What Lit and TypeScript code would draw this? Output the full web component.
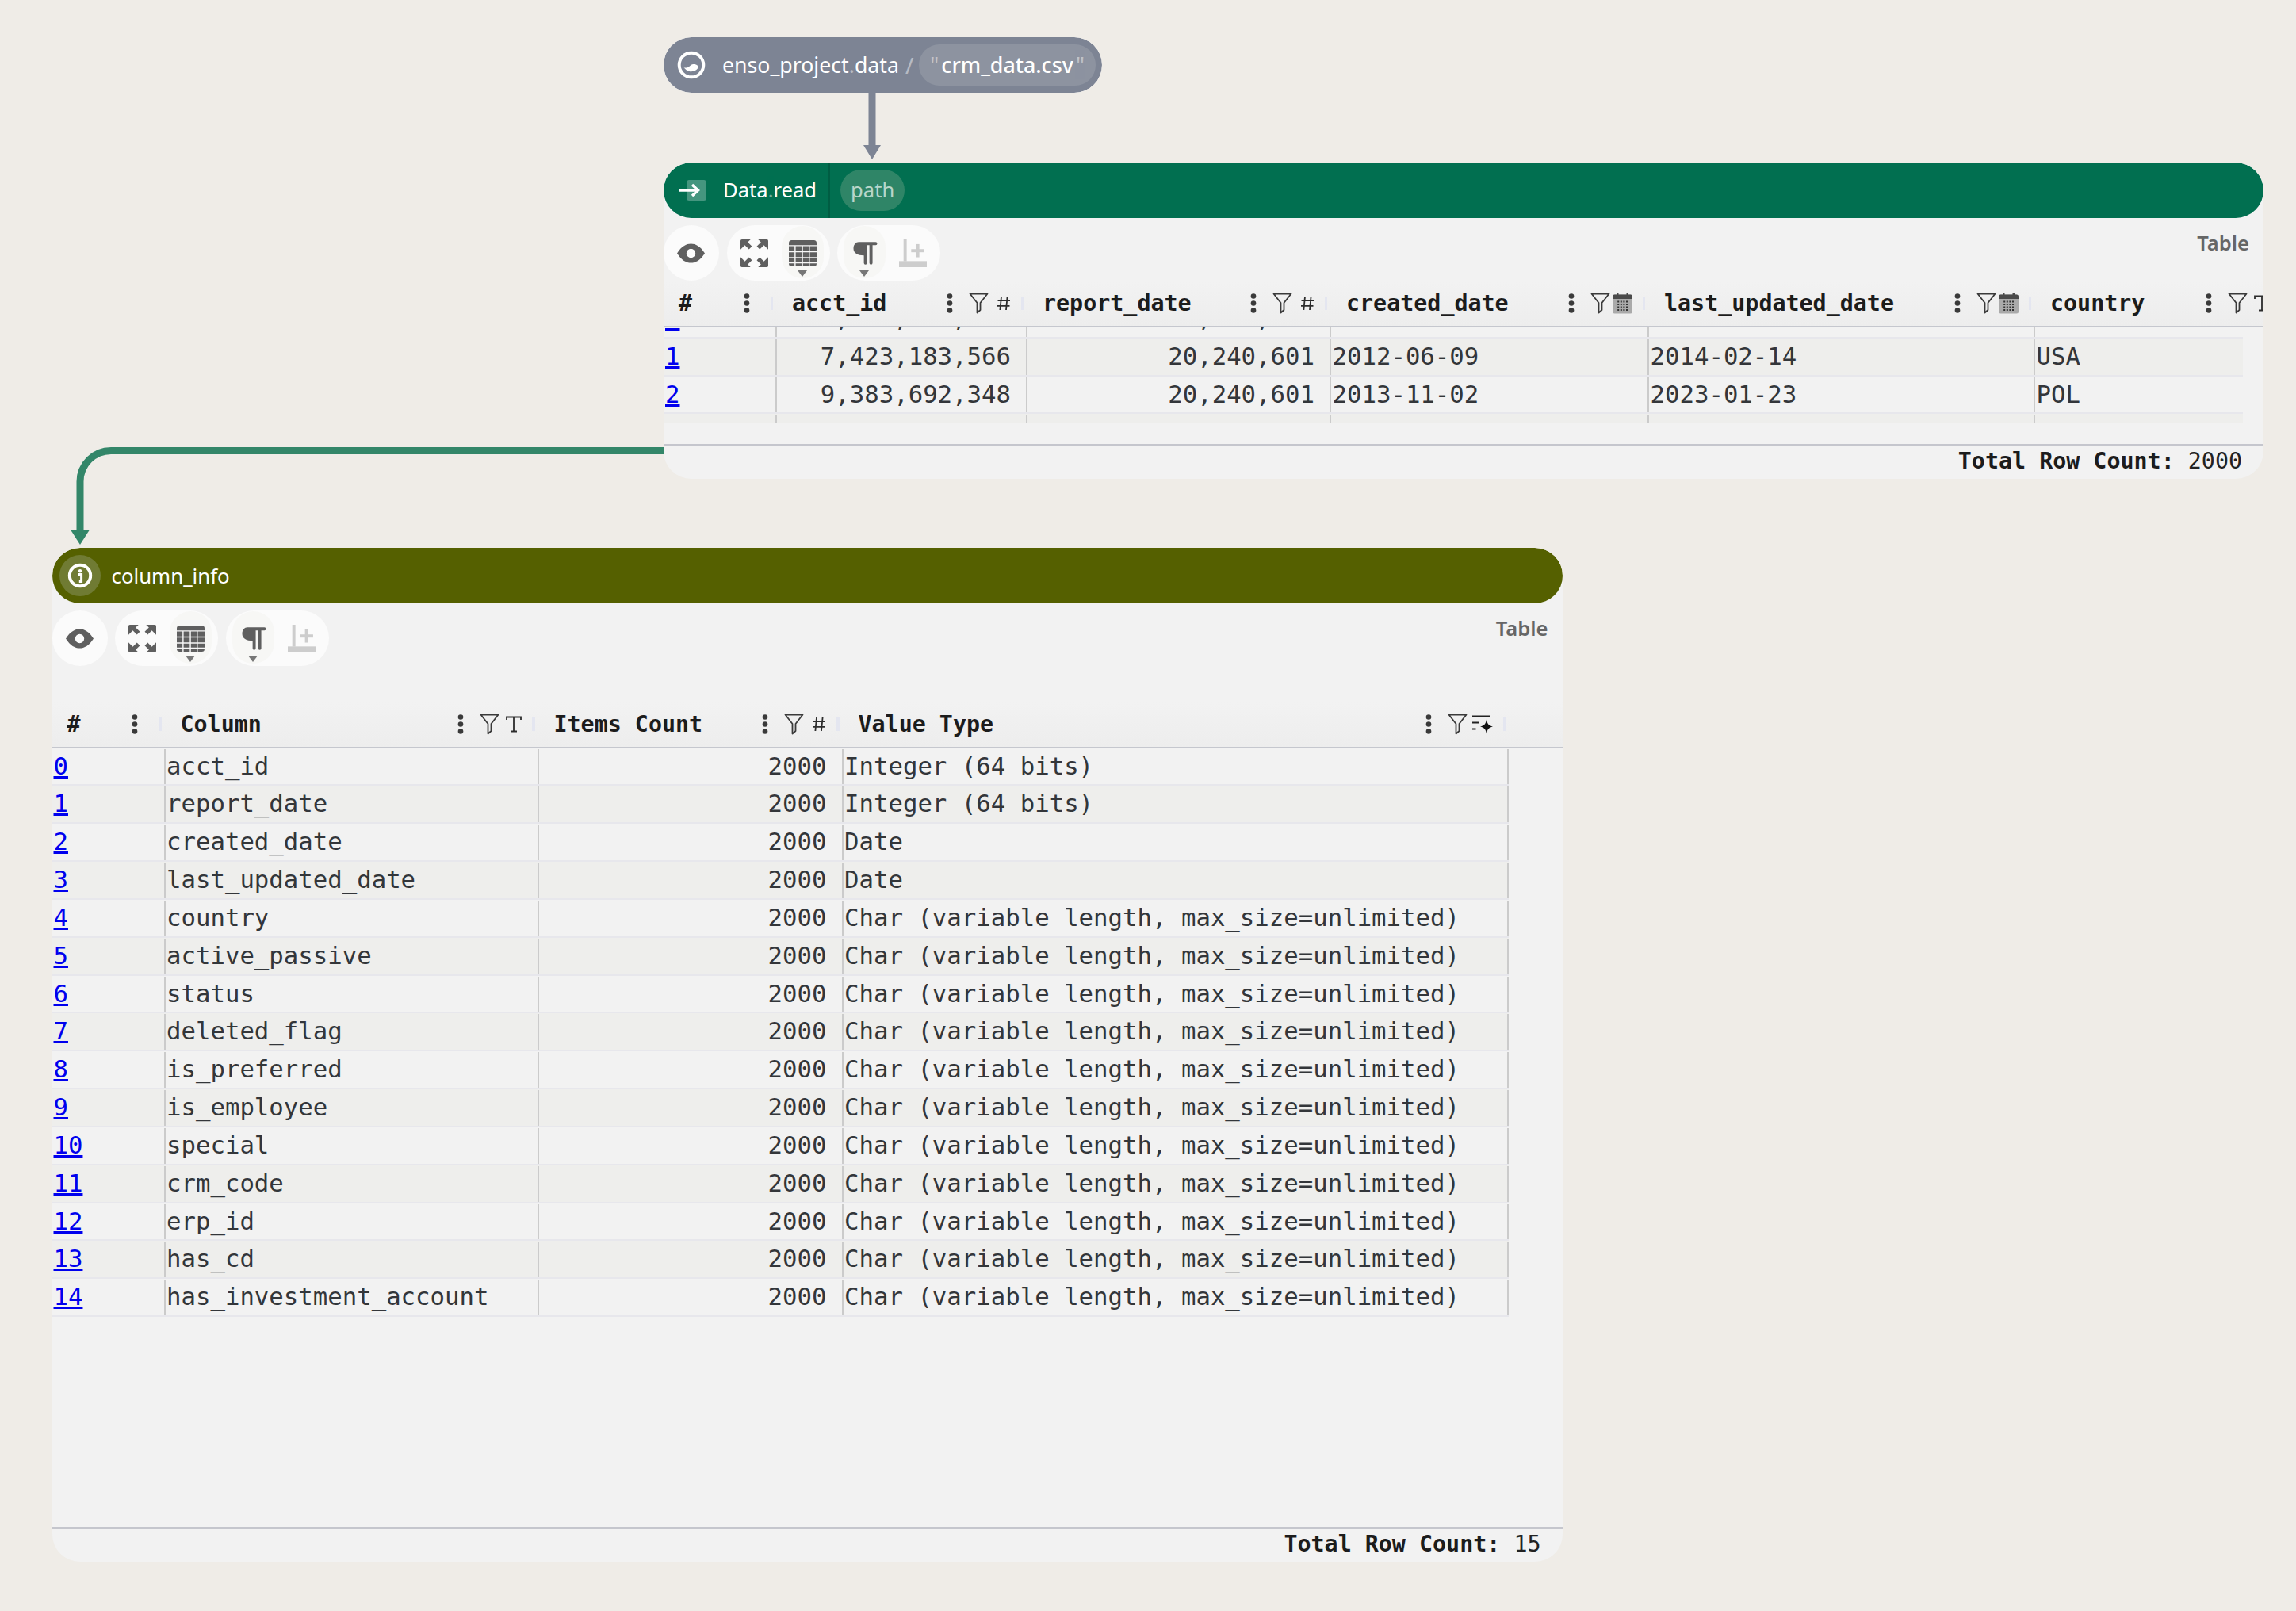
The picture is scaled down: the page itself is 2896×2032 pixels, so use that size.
import { css, html, LitElement, nothing, svg } from "lit";
import { customElement, property } from "lit/decorators.js";

type ColKind = "index" | "text" | "num";
type TypeIcon = "hash" | "text" | "date" | "mixed";

interface Column {
  name: string;
  width: number;
  kind: ColKind;
  type?: TypeIcon;
  headWidth?: number;
}

const GREY = "#5f5f5f";

const funnel = html`<svg class="funnel" width="25" height="27" viewBox="0 0 25 27">
  <path d="M1.5 1.5H23.5L14.5 13V22L10.5 25.5V13Z" fill="none" stroke="#3a3a3a" stroke-width="1.8" stroke-linejoin="round" />
</svg>`;

const dots = html`<svg class="dots" width="8" height="25" viewBox="0 0 8 25">
  <circle cx="4" cy="3.5" r="3.3" fill="#3a3a3a" />
  <circle cx="4" cy="12.5" r="3.3" fill="#3a3a3a" />
  <circle cx="4" cy="21.5" r="3.3" fill="#3a3a3a" />
</svg>`;

function typeIcon(type: TypeIcon) {
  if (type === "hash") {
    return html`<svg width="18" height="19" viewBox="0 0 18 19">
      <path d="M6 1L4.4 18M13.6 1L12 18M1.5 6.2H17M1 12.8H16.5" fill="none" stroke="#2c2c2c" stroke-width="1.8" />
    </svg>`;
  }
  if (type === "text") {
    return html`<svg width="20" height="21" viewBox="0 0 20 21">
      <path d="M1 5V1.5H19V5M10 1.5V19.5M6 19.5H14" fill="none" stroke="#2c2c2c" stroke-width="1.8" />
    </svg>`;
  }
  if (type === "date") {
    const cells = [];
    for (let y = 0; y < 4; y++) {
      for (let x = 0; x < 4; x++) {
        cells.push(svg`<rect x=${6.2 + x * 3.6} y=${10.5 + y * 3.5} width="2" height="2" fill="#333" />`);
      }
    }
    return html`<svg width="25" height="27" viewBox="0 0 25 27">
      <rect x="0" y="2.5" width="25" height="24" rx="2.5" fill="#aaa" />
      <path d="M0 5a2.5 2.5 0 0 1 2.5-2.5h20a2.5 2.5 0 0 1 2.5 2.5v3H0Z" fill="#4a4a4a" />
      <rect x="5" y="0" width="2.5" height="4" fill="#4a4a4a" />
      <rect x="17.5" y="0" width="2.5" height="4" fill="#4a4a4a" />
      ${cells}
    </svg>`;
  }
  return html`<svg width="26" height="24" viewBox="0 0 26 24">
    <path d="M0 1.5H22M0 9.5H8M0 17.5H4.5" fill="none" stroke="#222" stroke-width="2" />
    <path d="M18 5.5C18.8 10.5 20.5 13.2 26 14.5C20.5 15.8 18.8 18.5 18 23.5C17.2 18.5 15.5 15.8 10 14.5C15.5 13.2 17.2 10.5 18 5.5Z" fill="#111" />
  </svg>`;
}

const eyeIcon = html`<svg width="35" height="35" viewBox="0 0 16 16">
  <path fill-rule="evenodd" fill=${GREY} d="M0 8C2.6 3.9 5.3 2.5 8 2.5S13.4 3.9 16 8C13.4 12.1 10.7 13.5 8 13.5S2.6 12.1 0 8ZM8 5.4A2.6 2.6 0 1 0 8 10.6A2.6 2.6 0 1 0 8 5.4Z" />
</svg>`;

const expandCorner = "M0 .8A.8 .8 0 0 1 .8 0H5.8L4.2 1.6L6.6 4L4.9 5.7L2.5 3.3L0 5.8Z";
const expandIcon = html`<svg width="35" height="35" viewBox="0 0 16 16" fill=${GREY}>
  <path d=${expandCorner} />
  <path d=${expandCorner} transform="translate(16 0) scale(-1 1)" />
  <path d=${expandCorner} transform="translate(0 16) scale(1 -1)" />
  <path d=${expandCorner} transform="translate(16 16) scale(-1 -1)" />
</svg>`;

const gridIcon = html`<svg width="35" height="35" viewBox="0 0 16 16">
  <rect x="0" y=".5" width="16" height="15" rx="1.6" fill=${GREY} />
  <path d="M3.6 3.6V15.5M7.8 3.6V15.5M11.8 3.6V15.5M0 3.6H16M0 7.1H16M0 10.5H16M0 13.5H16" stroke="#f6f6f6" stroke-width=".65" fill="none" />
</svg>`;

const pilcrowIcon = html`<svg width="35" height="35" viewBox="0 0 16 16">
  <path fill=${GREY} d="M4.6 1.5H14.4A.9 .9 0 0 1 14.4 3.3H12.6V13.6A.9 .9 0 0 1 10.8 13.6V3.3H9.4V13.6A.9 .9 0 0 1 7.6 13.6V9.2C4 9.2 1.6 7.9 1.6 5.2C1.6 3 3 1.5 4.6 1.5Z" />
</svg>`;

const addRowIcon = html`<svg width="35" height="35" viewBox="0 0 16 16" fill="#cdcdcd">
  <rect x="2.6" y="0" width="1.8" height="12.6" />
  <rect x="0" y="12.5" width="16" height="3.5" />
  <rect x="7" y="5.6" width="7.6" height="1.8" />
  <rect x="9.9" y="2.7" width="1.8" height="7.6" />
</svg>`;

const ensoIcon = html`<svg width="36" height="36" viewBox="-18 -18 36 36">
  <circle r="15.3" fill="none" stroke="#fff" stroke-width="4" />
  <path fill="#fff" d="M-9.5 3.3C-6 4.2-3.5 3-1 .5C2-1.8 7-1.2 8.5 1.5C9.2 6 3 9-2.5 8C-5.5 7.5-7.5 5.5-9.5 3.3Z" />
</svg>`;

const readIcon = html`<svg width="34" height="27" viewBox="0 0 34 27">
  <rect x="9.5" y="0" width="24" height="26" rx="2.5" fill="#fff" fill-opacity=".27" />
  <path d="M0 13H21" stroke="#fff" stroke-width="3.6" />
  <path d="M16 6L23.5 13L16 20" fill="none" stroke="#fff" stroke-width="3.4" />
</svg>`;

const infoIcon = html`<svg width="32" height="32" viewBox="0 0 32 32">
  <circle cx="16" cy="16" r="13.2" fill="none" stroke="#fff" stroke-width="4" />
  <circle cx="16" cy="10.2" r="2.2" fill="#fff" />
  <path d="M13.8 14.5H17.6V23.5H14.8" fill="none" stroke="#fff" stroke-width="3" />
</svg>`;

@customElement("table-viz")
export class TableViz extends LitElement {
  @property({ type: Array }) columns: Column[] = [];
  @property({ type: Array }) rows: string[][] = [];
  @property({ type: Number }) total = 0;
  @property({ type: Number }) headGap = 0;
  @property({ type: Number }) scrollOffset = 0;
  @property({ type: Number }) bodyHeight = 0;
  @property({ type: Boolean }) closed = false;

  private renderHead(col: Column) {
    const width = col.headWidth ?? col.width;
    return html`<div class="hcell ${col.kind === "index" ? "hindex" : ""}" style="width:${width}px">
      <span class="hname">${col.name}</span>
      ${dots}
      ${col.type
        ? html`${funnel}<span class="tslot ${col.type === "mixed" ? "wide" : ""}">${typeIcon(col.type)}</span>`
        : nothing}
      <i class="sep"></i>
    </div>`;
  }

  private renderCell(col: Column, value: string, i: number) {
    const lined = i > 0 ? "lined" : "";
    const content = col.kind === "index" ? html`<a href="#">${value}</a>` : value;
    return html`<div class="cell ${col.kind} ${lined}" style="width:${col.width}px">${content}</div>`;
  }

  render() {
    const bodyStyle = this.bodyHeight ? `height:${this.bodyHeight}px` : "";
    return html`
      <div class="tools">
        <div class="pill single"><span class="ico">${eyeIcon}</span></div>
        <div class="pill">
          <span class="ico">${expandIcon}</span>
          <span class="ico menu">${gridIcon}</span>
        </div>
        <div class="pill">
          <span class="ico menu">${pilcrowIcon}</span>
          <span class="ico">${addRowIcon}</span>
        </div>
        <span class="viz-name">Table</span>
      </div>
      <div class="head" style="margin-top:${this.headGap}px">${this.columns.map((c) => this.renderHead(c))}</div>
      <div class="body" style=${bodyStyle}>
        <div class="rows" style="margin-top:${-this.scrollOffset}px">
          ${this.rows.map(
            (row, r) => html`<div class="row ${r % 2 ? "odd" : ""} ${this.closed ? "closed" : ""}">
              ${row.map((v, i) => this.renderCell(this.columns[i], v, i))}
            </div>`,
          )}
        </div>
      </div>
      <div class="fill"></div>
      <div class="foot"><b>Total Row Count:</b> ${this.total}</div>
    `;
  }

  static styles = css`
    :host {
      display: flex;
      flex-direction: column;
      flex: 1;
      min-height: 0;
      font-family: "DejaVu Sans Mono", monospace;
      overflow: hidden;
    }
    .tools {
      display: flex;
      gap: 9.5px;
      margin-top: 9px;
      height: 70px;
      flex: none;
    }
    .pill {
      display: flex;
      align-items: center;
      gap: 26px;
      padding: 0 17px;
      border-radius: 35px;
      background: #fbfbfb;
    }
    .pill.single {
      width: 70px;
      box-sizing: border-box;
    }
    .ico {
      position: relative;
      display: block;
      width: 35px;
      height: 35px;
    }
    .ico svg {
      position: relative;
      display: block;
    }
    .menu::before {
      content: "";
      position: absolute;
      left: -9px;
      top: -17px;
      width: 53px;
      height: 66px;
      border-radius: 27px;
      background: #f7f7f5;
    }
    .menu::after {
      content: "";
      position: absolute;
      left: 11px;
      top: 39px;
      border-style: solid;
      border-width: 8px 6px 0;
      border-color: #777 transparent transparent;
    }
    .viz-name {
      margin-left: auto;
      margin-top: 9px;
      padding-right: 18px;
      font: 600 25.6px/28px "Noto Sans", sans-serif;
      color: #666;
    }
    .head {
      display: flex;
      flex: none;
      height: 57.5px;
      box-sizing: border-box;
      border-bottom: 2.4px solid #c5c7ce;
      background: linear-gradient(#f2f2f2, #ededed);
      overflow: hidden;
    }
    .hcell {
      display: flex;
      flex: none;
      align-items: center;
      box-sizing: border-box;
      padding: 0 3px 0 21px;
      font-size: 28.33px;
      font-weight: 700;
      color: #1c1c1c;
    }
    .hname {
      flex: 1;
      white-space: nowrap;
    }
    .dots {
      flex: none;
      margin-right: 20px;
    }
    .funnel {
      flex: none;
      margin-right: 3px;
    }
    .tslot {
      display: flex;
      flex: none;
      justify-content: flex-end;
      width: 25px;
      margin-right: 13px;
    }
    .tslot.wide {
      width: 29px;
    }
    .hindex {
      padding-left: 19px;
    }
    .hindex .dots {
      margin-right: 26px;
    }
    .sep {
      flex: none;
      width: 3.5px;
      height: 17px;
      background: #e4e6f0;
    }
    .body {
      flex: none;
      overflow: hidden;
    }
    .row {
      display: flex;
      width: max-content;
      height: 47.85px;
      box-sizing: border-box;
      border-bottom: 2.4px solid #e7e7ec;
      background: #f2f2f2;
    }
    .row.odd {
      background: #eeeeec;
    }
    .cell {
      flex: none;
      box-sizing: border-box;
      margin-top: 1px;
      padding-left: 1.5px;
      font-size: 30.7px;
      line-height: 44px;
      color: #33363a;
      white-space: nowrap;
    }
    .lined {
      border-left: 2px solid #cbcbcb;
    }
    .closed .cell:last-child {
      border-right: 2px solid #cbcbcb;
    }
    .num {
      padding-right: 19px;
      text-align: right;
    }
    .index {
      padding-left: 2px;
    }
    .index a {
      color: #0000ee;
    }
    .fill {
      flex: 1;
    }
    .foot {
      flex: none;
      height: 44.5px;
      box-sizing: border-box;
      border-top: 2.4px solid #c5c6cd;
      padding-right: 27px;
      text-align: right;
      font-size: 28.33px;
      line-height: 40px;
      color: #222;
    }
    .foot b {
      color: #1c1c1c;
    }
  `;
}

const INFO_COLS: Column[] = [
  { name: "#", width: 141, kind: "index" },
  { name: "Column", width: 471, kind: "text", type: "text" },
  { name: "Items Count", width: 384, kind: "num", type: "hash" },
  { name: "Value Type", width: 841, kind: "text", type: "mixed" },
];

const CHAR_TYPE = "Char (variable length, max_size=unlimited)";
const INT_TYPE = "Integer (64 bits)";
const INFO_ROWS = [
  ["acct_id", INT_TYPE],
  ["report_date", INT_TYPE],
  ["created_date", "Date"],
  ["last_updated_date", "Date"],
  ["country", CHAR_TYPE],
  ["active_passive", CHAR_TYPE],
  ["status", CHAR_TYPE],
  ["deleted_flag", CHAR_TYPE],
  ["is_preferred", CHAR_TYPE],
  ["is_employee", CHAR_TYPE],
  ["special", CHAR_TYPE],
  ["crm_code", CHAR_TYPE],
  ["erp_id", CHAR_TYPE],
  ["has_cd", CHAR_TYPE],
  ["has_investment_account", CHAR_TYPE],
].map(([name, type], i) => [String(i), name, "2000", type]);

const READ_COLS: Column[] = [
  { name: "#", width: 141, kind: "index" },
  { name: "acct_id", width: 316, kind: "num", type: "hash" },
  { name: "report_date", width: 383, kind: "num", type: "hash" },
  { name: "created_date", width: 401, kind: "text", type: "date" },
  { name: "last_updated_date", width: 487, kind: "text", type: "date" },
  { name: "country", width: 263.5, headWidth: 317, kind: "text", type: "text" },
];

const READ_ROWS = [
  ["0", "4,162,005,712", "20,240,601", "2017-03-25", "2021-09-11", "USA"],
  ["1", "7,423,183,566", "20,240,601", "2012-06-09", "2014-02-14", "USA"],
  ["2", "9,383,692,348", "20,240,601", "2013-11-02", "2023-01-23", "POL"],
  ["3", "2,908,117,430", "20,240,601", "2015-08-17", "2019-05-06", "CAN"],
];

@customElement("graph-node")
export class GraphNode extends LitElement {
  @property({ type: String }) color = "#7d8494";

  render() {
    return html`
      <div class="bar" style="background:${this.color}"><slot name="bar"></slot></div>
      <slot></slot>
    `;
  }

  static styles = css`
    :host {
      display: flex;
      flex-direction: column;
      position: absolute;
      box-sizing: border-box;
      border-radius: 35px;
      background: #f2f2f2;
      overflow: hidden;
    }
    .bar {
      display: flex;
      flex: none;
      align-items: center;
      height: 70px;
      border-radius: 35px;
    }
    slot:not([name]) {
      display: flex;
      flex-direction: column;
      flex: 1;
      min-height: 0;
    }
  `;
}

@customElement("app-root")
export class AppRoot extends LitElement {
  private place(x: number, y: number, w: number, h: number) {
    return `left:${x}px;top:${y}px;width:${w}px;height:${h}px`;
  }

  render() {
    return html`
      <div class="canvas">
        <svg class="edges" width="2896" height="2032" viewBox="0 0 2896 2032">
          <path d="M1100 117V184" stroke="#7d8494" stroke-width="9" fill="none" />
          <path d="M1089 183H1111L1100 201Z" fill="#7d8494" />
          <path d="M840 568.5H140A39 39 0 0 0 101 607.5V672" stroke="#338669" stroke-width="9" fill="none" />
          <path d="M89.5 669H112.5L101 687Z" fill="#338669" />
        </svg>

        <graph-node class="source" style=${this.place(837, 47, 553, 70)} color="#7d8494">
          <div class="bar-row" slot="bar">
            <span class="bar-icon enso">${ensoIcon}</span>
            <span class="label source-label">enso_project<span class="dim">.</span>data</span>
            <span class="dim slash">/</span>
            <span class="string"><span class="dim">"</span><b>crm_data.csv</b><span class="dim">"</span></span>
          </div>
        </graph-node>

        <graph-node style=${this.place(837, 205, 2018, 399)} color="#016f50">
          <div class="bar-row" slot="bar">
            <span class="bar-icon read">${readIcon}</span>
            <span class="label">Data<span class="dim">.</span>read</span>
            <i class="bar-sep"></i>
            <span class="arg">path</span>
          </div>
          <table-viz
            .columns=${READ_COLS}
            .rows=${READ_ROWS}
            .total=${2000}
            .headGap=${1}
            .scrollOffset=${33.6}
            .bodyHeight=${120.5}
          ></table-viz>
        </graph-node>

        <graph-node style=${this.place(65.5, 691, 1905, 1279)} color="#556000">
          <div class="bar-row" slot="bar">
            <span class="bar-icon info">${infoIcon}</span>
            <span class="label info-label">column_info</span>
          </div>
          <table-viz
            .columns=${INFO_COLS}
            .rows=${INFO_ROWS}
            .total=${15}
            .headGap=${46}
            .closed=${true}
          ></table-viz>
        </graph-node>
      </div>
    `;
  }

  static styles = css`
    :host {
      display: block;
    }
    .canvas {
      position: relative;
      width: 2896px;
      height: 2032px;
      background: #efece7;
      overflow: hidden;
    }
    .edges {
      position: absolute;
      left: 0;
      top: 0;
    }
    .bar-row {
      display: flex;
      align-items: center;
      height: 70px;
      font: 400 25.6px/70px "Noto Sans", sans-serif;
      color: #fff;
      white-space: pre;
    }
    .source-label {
      font-size: 26.7px;
    }
    .info-label {
      font-size: 25.8px;
    }
    .bar-icon {
      display: flex;
      flex: none;
      align-items: center;
      justify-content: center;
    }
    .enso {
      margin-left: 17px;
      margin-right: 21px;
    }
    .read {
      margin-left: 20px;
      margin-right: 21px;
    }
    .info {
      width: 52px;
      height: 52px;
      margin-left: 9px;
      margin-right: 14px;
      border-radius: 26px;
      background: #707b33;
    }
    .dim {
      opacity: 0.45;
    }
    .slash {
      margin-left: 8px;
      margin-right: 7px;
      font-size: 28px;
    }
    .string {
      display: flex;
      align-items: center;
      height: 52px;
      padding: 0 14px;
      border-radius: 26px;
      background: #8d93a0;
      font-size: 26.8px;
    }
    .string b {
      margin: 0 3px;
      font-weight: 500;
    }
    .bar-sep {
      align-self: stretch;
      width: 2px;
      margin-left: 15px;
      margin-right: 13px;
      background: rgba(0, 0, 0, 0.16);
    }
    .arg {
      height: 52px;
      padding: 0 13px;
      border-radius: 26px;
      background: #2f8567;
      line-height: 52px;
      color: #b9d6ca;
    }
  `;
}

declare global {
  interface HTMLElementTagNameMap {
    "app-root": AppRoot;
    "graph-node": GraphNode;
    "table-viz": TableViz;
  }
}
